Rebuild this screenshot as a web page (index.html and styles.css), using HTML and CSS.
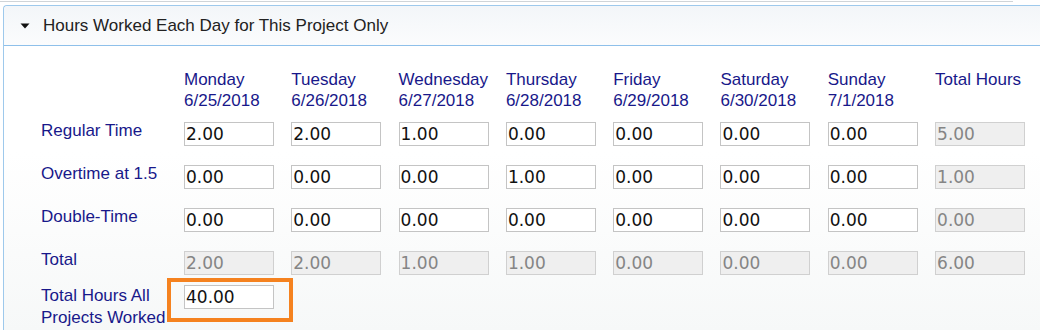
FILE: index.html
```html
<!DOCTYPE html>
<html lang="en">
<head>
    <meta charset="UTF-8">
    <title>Hours Worked</title>
    <link rel="stylesheet" href="styles.css">
</head>
<body>
    <div class="topline"></div>
    <section class="panel">
        <div class="panel-head">
            <svg class="caret" width="10" height="6" viewBox="0 0 10 6"><path d="M0.5 0.5 L9.5 0.5 L5 5.5 Z" fill="#111"/></svg>
            <span>Hours Worked Each Day for This Project Only</span>
        </div>
        <div class="panel-body">
            <div class="hours">
                <div></div>
                <div class="day">Monday<br>6/25/2018</div>
                <div class="day">Tuesday<br>6/26/2018</div>
                <div class="day">Wednesday<br>6/27/2018</div>
                <div class="day">Thursday<br>6/28/2018</div>
                <div class="day">Friday<br>6/29/2018</div>
                <div class="day">Saturday<br>6/30/2018</div>
                <div class="day">Sunday<br>7/1/2018</div>
                <div class="day">Total Hours</div>

                <div class="label">Regular Time</div>
                <input class="hrs" value="2.00">
                <input class="hrs" value="2.00">
                <input class="hrs" value="1.00">
                <input class="hrs" value="0.00">
                <input class="hrs" value="0.00">
                <input class="hrs" value="0.00">
                <input class="hrs" value="0.00">
                <input class="hrs" value="5.00" disabled>

                <div class="label">Overtime at 1.5</div>
                <input class="hrs" value="0.00">
                <input class="hrs" value="0.00">
                <input class="hrs" value="0.00">
                <input class="hrs" value="1.00">
                <input class="hrs" value="0.00">
                <input class="hrs" value="0.00">
                <input class="hrs" value="0.00">
                <input class="hrs" value="1.00" disabled>

                <div class="label">Double-Time</div>
                <input class="hrs" value="0.00">
                <input class="hrs" value="0.00">
                <input class="hrs" value="0.00">
                <input class="hrs" value="0.00">
                <input class="hrs" value="0.00">
                <input class="hrs" value="0.00">
                <input class="hrs" value="0.00">
                <input class="hrs" value="0.00" disabled>

                <div class="label">Total</div>
                <input class="hrs" value="2.00" disabled>
                <input class="hrs" value="2.00" disabled>
                <input class="hrs" value="1.00" disabled>
                <input class="hrs" value="1.00" disabled>
                <input class="hrs" value="0.00" disabled>
                <input class="hrs" value="0.00" disabled>
                <input class="hrs" value="0.00" disabled>
                <input class="hrs" value="6.00" disabled>

                <div class="label last">Total Hours All<br>Projects Worked</div>
                <div class="highlight">
                    <input class="hrs" value="40.00">
                </div>
            </div>
        </div>
    </section>
</body>
</html>
```

FILE: styles.css
```css
body {
    margin: 0;
    background: #ffffff;
    font-family: "Liberation Sans", Arial, sans-serif;
    overflow: hidden;
}
.topline {
    margin: 1px 27px 0 0;
    border-top: 1px solid #cfd4d8;
}
.panel {
    margin: 3px 0 0 3px;
    border: 1px solid #9ec9ec;
    border-right: none;
    border-bottom: none;
    border-radius: 4px 0 0 0;
    height: 325px;
    overflow: hidden;
    background: linear-gradient(#ffffff 45%, #f6f8f8);
}
.panel-head {
    height: 39px;
    display: flex;
    align-items: center;
    gap: 13px;
    padding-left: 16px;
    border-bottom: 1px solid #8ec0ea;
    border-radius: 4px 0 0 0;
    background: linear-gradient(#f3f6f9, #fbfcfd);
    color: #222222;
    font-size: 17px;
}
.caret {
    margin-top: 1px;
}
.panel-body {
    padding: 21px 0 0 37px;
}
.hours {
    display: grid;
    grid-template-columns: 143px repeat(8, 107.3px);
    grid-template-rows: 53px 43px 43px 43px 34px auto;
    align-items: start;
    color: #18188a;
    font-size: 17px;
}
.day {
    padding-top: 2px;
    line-height: 21px;
}
.label {
    line-height: 22px;
}
.label.last {
    padding-top: 2px;
}
.hrs {
    box-sizing: border-box;
    width: 90px;
    height: 24px;
    margin: 2px 0 0 0;
    padding: 0 1px;
    border: 1px solid #c4c4c4;
    background: #ffffff;
    color: #111111;
    font-family: "DejaVu Sans", Verdana, sans-serif;
    font-size: 17px;
}
.hrs:disabled {
    background: #efefef;
    border-color: #d0d0d0;
    color: #858585;
}
.highlight {
    position: relative;
    width: 90px;
}
.highlight::after {
    content: "";
    position: absolute;
    left: -17px;
    top: -5px;
    width: 118px;
    height: 36px;
    border: 4px solid #f5821f;
}
```
